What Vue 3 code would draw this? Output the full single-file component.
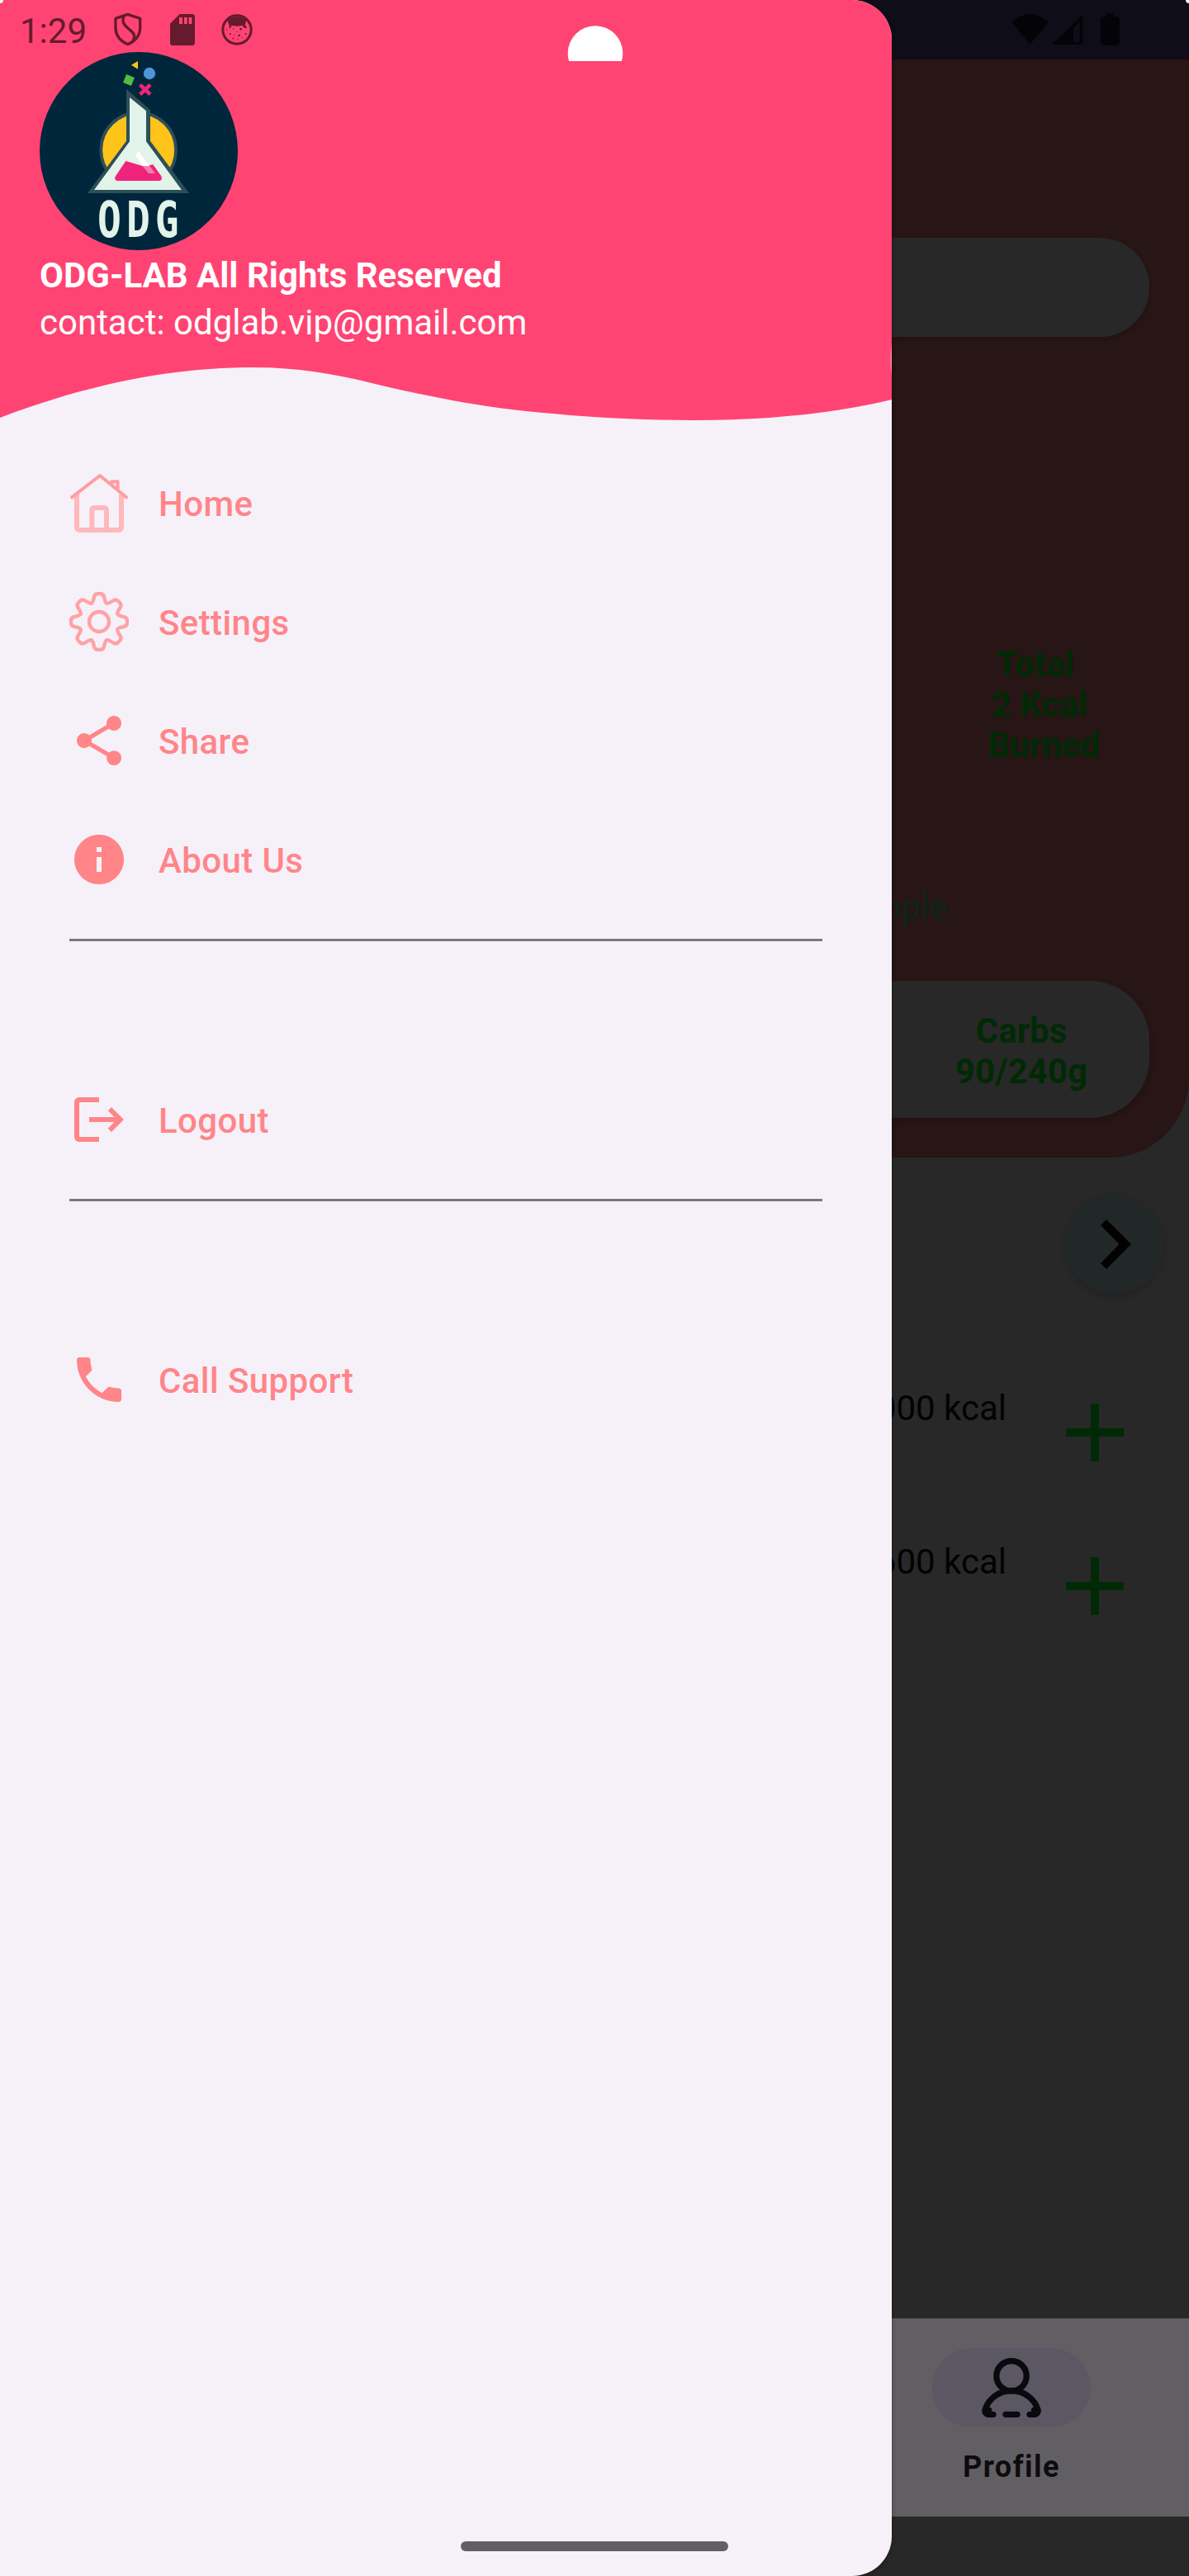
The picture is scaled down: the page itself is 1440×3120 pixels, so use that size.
<script setup>
const menuGroups = [
  [
    { label: 'Home', icon: 'home' },
    { label: 'Settings', icon: 'settings' },
    { label: 'Share', icon: 'share' },
    { label: 'About Us', icon: 'info' },
  ],
  [{ label: 'Logout', icon: 'logout' }],
  [{ label: 'Call Support', icon: 'call' }],
]

const paths = {
  share:
    'M18 16.08c-.76 0-1.44.3-1.96.77L8.91 12.7c.05-.23.09-.46.09-.7s-.04-.47-.09-.7l7.05-4.11c.54.5 1.25.81 2.04.81 1.66 0 3-1.34 3-3s-1.34-3-3-3-3 1.34-3 3c0 .24.04.47.09.7L8.04 9.81C7.5 9.31 6.79 9 6 9c-1.66 0-3 1.34-3 3s1.34 3 3 3c.79 0 1.5-.31 2.04-.81l7.12 4.16c-.05.21-.08.43-.08.65 0 1.61 1.31 3 2.92 3s3-1.31 3-3-1.31-2.92-3-2.92z',
  info: 'M12 2C6.48 2 2 6.48 2 12s4.48 10 10 10 10-4.48 10-10S17.52 2 12 2zm1 15h-2v-6h2v6zm0-8h-2V7h2v2z',
  logout:
    'M17 7l-1.41 1.41L18.17 11H8v2h10.17l-2.58 2.58L17 17l5-5zM4 5h8V3H4c-1.1 0-2 .9-2 2v14c0 1.1.9 2 2 2h8v-2H4V5z',
  call: 'M6.62 10.79c1.44 2.83 3.76 5.14 6.59 6.59l2.2-2.2c.27-.27.67-.36 1.02-.24 1.12.37 2.33.57 3.57.57.55 0 1 .45 1 1V20c0 .55-.45 1-1 1-9.39 0-17-7.61-17-17 0-.55.45-1 1-1h3.5c.55 0 1 .45 1 1 0 1.25.2 2.45.57 3.57.11.35.03.74-.25 1.02l-2.2 2.2z',
}

// Gear outline: one rounded tooth repeated every 45 degrees around (36, 36).
const tooth = [
  ['L', [-9, -22.4]],
  ['Q', [-7.4, -23.5], [-6.2, -29.5]],
  ['Q', [-5.2, -34], [-1.5, -34]],
  ['L', [1.5, -34]],
  ['Q', [5.2, -34], [6.2, -29.5]],
  ['Q', [7.4, -23.5], [9, -22.4]],
]
function spin([x, y], k) {
  const a = (k * Math.PI) / 4
  const c = Math.cos(a)
  const s = Math.sin(a)
  return `${(36 + x * c - y * s).toFixed(2)} ${(36 + x * s + y * c).toFixed(2)}`
}
let gear = ''
for (let k = 0; k < 8; k++) {
  for (const [cmd, ...pts] of tooth) {
    gear += (gear ? cmd : 'M') + pts.map((p) => spin(p, k)).join(' ')
  }
}
gear += 'Z'

const meals = ['1000 kcal', '600 kcal']
</script>

<template>
  <div class="phone">
    <main class="page">
      <div class="sysbar">
        <svg width="132" height="40" viewBox="495 45 396 120">
          <path d="M496 80Q528 51 562 51T629 80L562 162Z" />
          <path fill-rule="evenodd" d="M642 162L754 52V162ZM720 101V152H743V78Z" />
          <path d="M840 48h27v12h13l8 7v90l-8 8h-53l-8-8V67l8-7h13z" />
        </svg>
      </div>

      <section class="hero">
        <div class="search"></div>
        <div class="burned">
          <span>Total </span>
          <span>2 Kcal</span>
          <span> Burned</span>
        </div>
        <div class="food">Apple</div>
        <div class="macros">
          <div class="macro">Carbs<br />90/240g</div>
        </div>
      </section>

      <button class="next" type="button">
        <svg width="38" height="60" viewBox="0 0 38 60"><path d="M7 0L37 30 7 60 0 53 22.5 30 0 7Z" /></svg>
      </button>

      <div class="meals">
        <div v-for="meal in meals" :key="meal" class="meal">
          <span>{{ meal }}</span>
          <svg width="70" height="70" viewBox="0 0 70 70"><path d="M30 0h10v30h30v10H40v30H30V40H0V30h30z" /></svg>
        </div>
      </div>

      <nav class="tabs">
        <div class="tab">
          <div class="pill">
            <svg width="72" height="72" viewBox="0 0 72 72" fill="none" stroke="#0a090e" stroke-width="7.3" stroke-linecap="round">
              <circle cx="36" cy="21.7" r="18.2" />
              <path d="M14 68.3H8Q3 67.5 4 62.5C8 50 20 39.5 36 39.5S64 50 68 62.5Q69 67.5 64 68.3H58M29 68.3H43" />
              <path d="M6.5 66L8.5 63M65.5 66L63.5 63" />
            </svg>
          </div>
          <span>Profile</span>
        </div>
      </nav>
      <div class="navpad"></div>
    </main>

    <aside class="drawer">
      <header class="head">
        <svg class="wave" width="1080" height="513" viewBox="0 0 1080 513">
          <path
            fill="#ff4473"
            d="M0 0H1080V484C1010 501 925 509 840 509 765 509 690 504 620 496 560 489 500 476 446 463 405 453 360 445 308 445 200 445 100 468 0 506Z"
          />
          <path fill="#fb8dac" d="M1080 416q-3 20 0 39z" />
        </svg>
        <svg class="logo" width="240" height="240" viewBox="144 189 720 720">
          <circle cx="504" cy="549" r="360" fill="#00263b" />
          <circle cx="503" cy="545" r="136" fill="#ffc41a" stroke="#2c4f59" stroke-width="11" />
          <path fill="#2c4f59" d="M459 323L546 400V512L687 702H318L459 512Z" />
          <path fill="#e2f4ea" d="M471 354L531 403V514L660 690H342L471 514Z" />
          <path fill="#f0247c" d="M457 585L520 604 556 598 586 640Q592 657 578 657H426Q412 654 420 640Z" />
          <path fill="#fff" d="M493 565L503 549 544 603H518Z" />
          <path fill="#f57db0" d="M518 603H544L564 630H540Z" />
          <path fill="#ffc41a" d="M477 236L501 222V251Z" />
          <circle cx="543" cy="267" r="21.5" fill="#4c97d8" />
          <rect x="452" y="275" width="32" height="32" fill="#57b947" transform="rotate(22 468 291)" />
          <path stroke="#f0247c" stroke-width="14" d="M509 308L546 343M546 308L509 343" />
          <text class="mark" transform="translate(354 860) scale(.79 1)">ODG</text>
        </svg>
        <div class="owner">ODG-LAB All Rights Reserved</div>
        <div class="contact">contact: odglab.vip@gmail.com</div>

        <div class="status">
          <span>1:29</span>
          <svg class="shield" width="34" height="41" viewBox="415 46 102 123" fill="none" stroke="#661a2e" stroke-width="10" stroke-linejoin="round">
            <path d="M465 53L510 68V105Q508 144 465 162 423 144 421 105V68Z" />
            <path d="M450 60Q443 82 458 96L482 118Q495 132 484 149" />
          </svg>
          <svg class="card" width="30" height="38" viewBox="618 51 90 114">
            <path
              fill="#661a2e"
              fill-rule="evenodd"
              d="M653 51H698Q708 51 708 61V155Q708 165 698 165H628Q618 165 618 155V86ZM651 63V87H663V63ZM669 63V87H680V63ZM686 63V87H697V63Z"
            />
          </svg>
          <svg class="face" width="38" height="38" viewBox="804 50 114 114">
            <circle cx="861" cy="107" r="51.500" fill="none" stroke="#661a2e" stroke-width="9" />
            <path fill="#661a2e" d="M826 72Q861 48 896 72L890 88 898 101H890Q883 100 881 91 861 97 842 91 840 101 834 103L832 88Z" />
            <g fill="#661a2e">
              <circle cx="869" cy="128" r="4" /><circle cx="875" cy="105" r="4" /><circle cx="848" cy="104" r="2.500" />
              <circle cx="836" cy="122" r="3" /><circle cx="852" cy="126" r="2" /><circle cx="847" cy="139" r="2.500" />
              <circle cx="864" cy="142" r="2" /><circle cx="893" cy="122" r="3" /><circle cx="861" cy="114" r="2" />
              <circle cx="824" cy="107" r="2" /><circle cx="880" cy="136" r="2" />
            </g>
          </svg>
        </div>
        <svg class="camera" width="68" height="43" viewBox="0 0 68 43"><circle cx="34" cy="33.500" r="33.300" fill="#fff" /></svg>
      </header>

      <div class="menu">
        <div v-for="(group, i) in menuGroups" :key="i" class="group">
          <a v-for="item in group" :key="item.label" class="item">
            <svg v-if="item.icon === 'home'" width="72" height="72" viewBox="0 0 72 72" fill="none" stroke-linecap="round" stroke-linejoin="round">
              <g stroke="#ffb8bc" stroke-width="6">
                <path d="M9 27V65Q9 69 13 69H59Q63 69 63 65V27" />
                <path d="M27.300 68V45Q27.300 42 30 42H42Q45 42 45 45V68" />
              </g>
              <path stroke="#ff9da1" stroke-width="4" d="M3 29.300L37 3 69 29.300M51.300 13V10.300H58.600V19" />
            </svg>
            <svg v-else-if="item.icon === 'settings'" width="72" height="72" viewBox="0 0 72 72" fill="none" stroke="#ffa2a6" stroke-width="4.400" stroke-linejoin="round">
              <path :d="gear" />
              <circle cx="36" cy="36" r="12" />
            </svg>
            <svg v-else width="72" height="72" viewBox="0 0 24 24" fill="#ff8589"><path :d="paths[item.icon]" /></svg>
            <span>{{ item.label }}</span>
          </a>
        </div>
      </div>
    </aside>

    <div class="gesture"></div>
    <i class="corner left"></i>
    <i class="corner right"></i>
  </div>
</template>

<style>
body {
  margin: 0;
}
</style>

<style scoped>
.phone {
  position: relative;
  width: 1440px;
  height: 3120px;
  overflow: hidden;
  background: #282828;
  font: 400 42px/49px Roboto, sans-serif;
}
svg {
  display: block;
  flex: none;
}

/* dimmed page behind the drawer */
.page {
  display: flex;
  flex-direction: column;
  height: 100%;
}
.sysbar {
  display: flex;
  justify-content: flex-end;
  box-sizing: border-box;
  height: 72px;
  padding: 15px 83px 0 0;
  background: #0f0d18;
  fill: #040408;
}
.hero {
  display: flex;
  flex-direction: column;
  align-items: flex-end;
  box-sizing: border-box;
  height: 1330px;
  padding: 216px 48px 0;
  border-bottom-right-radius: 96px;
  background: #281516;
}
.search {
  width: 100%;
  height: 120px;
  border-radius: 60px;
  background: #282828;
  box-shadow: 0 2px 6px rgba(0, 0, 0, 0.12);
}
.burned {
  display: flex;
  flex-direction: column;
  align-items: center;
  width: 266px;
  margin-top: 372px;
  color: #002a05;
  font-weight: 700;
  white-space: pre;
}
.food {
  margin: 147px 244px 0 0;
  color: #0d2619;
}
.macros {
  display: flex;
  justify-content: flex-end;
  box-sizing: border-box;
  width: 100%;
  height: 166px;
  margin-top: 65px;
  padding-top: 36px;
  border-radius: 72px;
  background: #282828;
  box-shadow: 0 3px 8px rgba(0, 0, 0, 0.18);
}
.macro {
  width: 310px;
  color: #002a05;
  font-weight: 700;
  text-align: center;
}
.next {
  display: flex;
  align-items: center;
  align-self: flex-end;
  box-sizing: border-box;
  width: 120px;
  height: 120px;
  margin: 45px 30px 0 0;
  padding: 0 0 0 43px;
  border: 0;
  border-radius: 50%;
  background: #222827;
  box-shadow: 0 4px 8px rgba(0, 0, 0, 0.15);
  fill: #020202;
}
.meals {
  margin-top: 114px;
  color: #020202;
}
.meal {
  display: flex;
  justify-content: flex-end;
  align-items: flex-start;
  height: 186px;
  padding-right: 79px;
}
.meal svg {
  margin: 19px 0 0 72px;
  fill: #002a05;
}
.tabs {
  display: flex;
  justify-content: flex-end;
  height: 240px;
  margin-top: auto;
  background: #625f64;
}
.tab {
  display: flex;
  flex-direction: column;
  align-items: center;
  width: 430px;
  padding-top: 36px;
  color: #0c0c0d;
  font: 700 36px/42px Roboto, sans-serif;
  letter-spacing: 1.5px;
}
.tab span {
  margin-top: 27px;
}
.pill {
  display: flex;
  justify-content: center;
  box-sizing: border-box;
  width: 192px;
  height: 96px;
  padding-top: 12px;
  border-radius: 48px;
  background: #5c5863;
}
.navpad {
  height: 72px;
}

/* drawer */
.drawer {
  position: absolute;
  top: 0;
  left: 0;
  width: 1080px;
  height: 3120px;
  border-radius: 0 48px 48px 0;
  overflow: hidden;
  background: #f6f1f9;
  box-shadow: 0 2px 6px rgba(0, 0, 0, 0.3);
}
.head {
  position: relative;
  box-sizing: border-box;
  height: 513px;
  padding: 63px 48px 0;
  color: #fff;
}
.wave {
  position: absolute;
  top: 0;
  left: 0;
}
.logo,
.owner,
.contact {
  position: relative;
}
.mark {
  fill: #e2f4ea;
  font: 700 182px "DejaVu Sans Mono", monospace;
  letter-spacing: 23px;
}
.owner {
  margin-top: 6px;
  font-weight: 700;
}
.contact {
  margin-top: 8px;
}
.status {
  position: absolute;
  top: 13px;
  left: 24px;
  display: flex;
  color: #661a2e;
}
.status span {
  width: 114px;
}
.shield {
  margin-top: 2px;
}
.card {
  margin: 4px 0 0 34px;
}
.face {
  margin: 4px 0 0 32px;
}
.camera {
  position: absolute;
  top: 31px;
  left: 687px;
}
.menu {
  padding: 24px 84px;
}
.group + .group {
  margin-top: 24px;
  padding-top: 144px;
  border-top: 3px solid #7a757f;
}
.item {
  display: flex;
  align-items: center;
  gap: 36px;
  height: 144px;
  color: #ff8589;
  font-weight: 500;
  letter-spacing: 0.4px;
}
.item span {
  padding-top: 3px;
}

.gesture {
  position: absolute;
  bottom: 30px;
  left: 558px;
  width: 324px;
  height: 12px;
  border-radius: 6px;
  background: #625f64;
}
.corner {
  position: absolute;
  top: 0;
  width: 4px;
  height: 4px;
  background: #f4f0f4;
}
.left {
  left: 0;
  border-bottom-right-radius: 4px;
}
.right {
  right: 0;
  border-bottom-left-radius: 4px;
}
</style>
